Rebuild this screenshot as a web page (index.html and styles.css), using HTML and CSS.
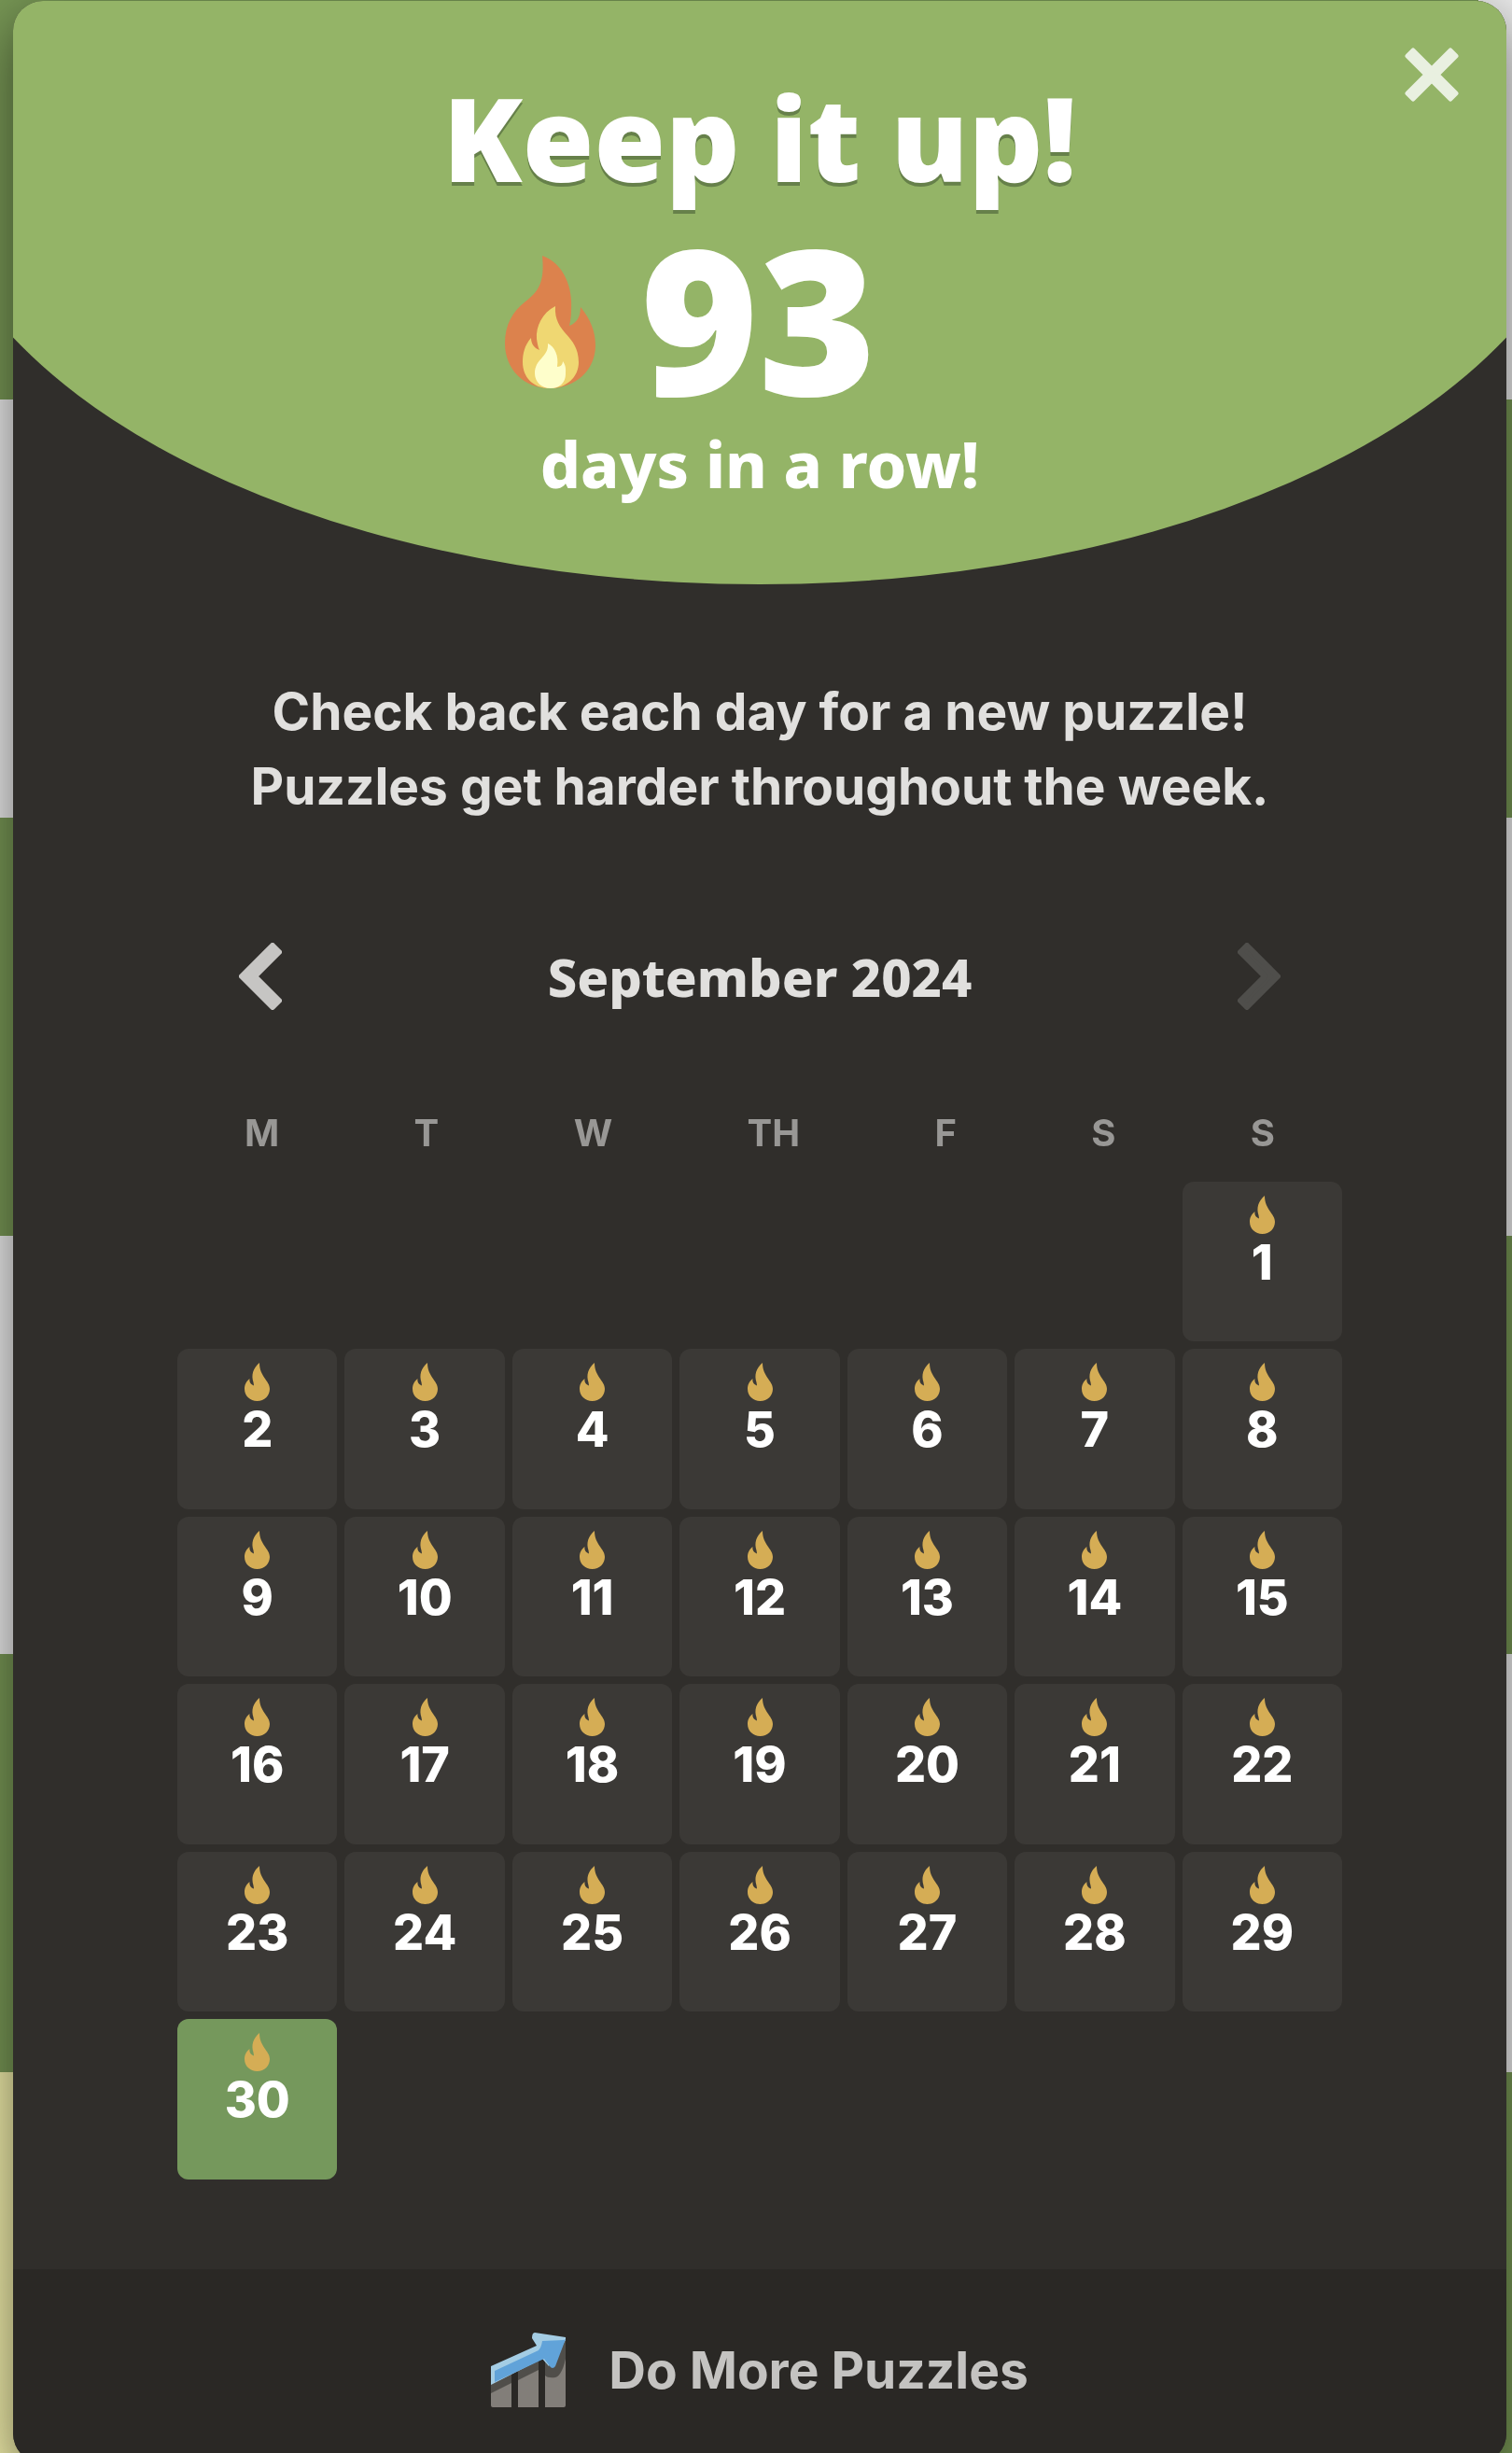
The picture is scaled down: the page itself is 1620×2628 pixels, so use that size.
FILE: index.html
```html
<!DOCTYPE html>
<html lang="en">
<head>
<meta charset="utf-8">
<meta name="viewport" content="width=device-width, initial-scale=1">
<title>Daily Puzzle Streak</title>
<link rel="stylesheet" href="styles.css">
</head>
<body>
<svg class="defs" width="0" height="0" aria-hidden="true">
  <symbol id="flame" viewBox="0 0 27 41">
    <path d="M16 0C9 6 7 13 9.500 21C9.800 23 10 24 10 24.500C6 23 5 20 5.500 17C1.500 20 0 24 0 28C0 35.500 6 41 13.500 41C21.500 41 27 35 27 28C27 19 16 15 16 0Z"/>
  </symbol>
</svg>
<div class="board" aria-hidden="true">
  <div class="file file-left"><i></i><i></i><i></i><i></i><i></i><i class="moved"></i></div>
  <div class="file file-right"><i></i><i></i><i></i><i></i><i></i><i></i></div>
</div>
<div class="overlay">
  <main class="modal" role="dialog" aria-labelledby="title">
    <header class="hero">
      <h1 id="title" class="title">Keep it up!</h1>
      <div class="streak">
        <svg class="streak-flame" viewBox="0 0 97 142" aria-hidden="true">
          <path fill="#dc824d" d="M40 0C63 8 73 34 71 59C71 65 70 70 69 75C77 72 81 65 81 55C92 68 97 82 97 96C97 123 75 142 48 142C21 142 0 122 0 94C0 74 8 60 22 49C35 39 43 30 40 0Z"/>
          <path fill="#efd772" d="M54 54C40 61 33 76 34 89C35 96 36 99 37 101C31 99 28 94 28 88C21 96 19 105 19 114C19 130 30 142 48 142C66 142 79 130 79 114C79 84 52 84 54 54Z"/>
          <path fill="#fefecb" d="M46 94C53 97 58 107 56 119C60 119 62 116 62 113C66 118 65 124 65 127C65 136 58 142 49 142C39 142 32 135 32 126C32 110 47 109 46 94Z"/>
        </svg>
        <strong class="count">93</strong>
      </div>
      <p class="unit">days in a row!</p>
      <button class="close" type="button" aria-label="Close">
        <svg viewBox="0 0 60 60" aria-hidden="true"><path d="M10 4L30 24L50 4L56 10L36 30L56 50L50 56L30 36L10 56L4 50L24 30L4 10Z"/></svg>
      </button>
    </header>

    <p class="intro">Check back each day for a new puzzle!<br>Puzzles get harder throughout the week.</p>

    <section class="calendar" aria-labelledby="month">
      <div class="month-bar">
        <button class="nav" type="button" aria-label="Previous month">
          <svg viewBox="0 0 46 72" aria-hidden="true"><path d="M36 3L3 36L36 69L43 62L17 36L43 10Z"/></svg>
        </button>
        <h2 id="month" class="month">September 2024</h2>
        <button class="nav" type="button" aria-label="Next month" disabled>
          <svg viewBox="0 0 46 72" aria-hidden="true"><path d="M10 3L43 36L10 69L3 62L29 36L3 10Z"/></svg>
        </button>
      </div>
      <div class="weekdays"><span>M</span><span>T</span><span>W</span><span>TH</span><span>F</span><span>S</span><span>S</span></div>
      <div class="days" id="days"></div>
    </section>

    <footer class="footer">
      <button class="more" type="button">
        <svg class="chart" viewBox="0 0 80 80" aria-hidden="true">
          <path fill="#827e79" d="M0 56L22 45V80H2Q0 80 0 78ZM29 41L51 30V80H29ZM58 28L80 10V78Q80 80 78 80H58Z"/>
          <path fill="#504e4a" d="M0 54L22 43V54L0 65ZM29 38L51 28V40L29 51ZM58 26L80 8V28Q76 46 69 48Q61 49 58 46Z"/>
          <path fill="#a4cde4" d="M0 36L49 14L44 6Q44 0 47 0L80 5V8L62 36L55 28L0 56Z"/>
          <path fill="#61a3d9" d="M4 41L51 19Q54 16 55 9L78 8L80 7L69 36Q66 40 63 36L57 28L4 53Z"/>
        </svg>
        <span>Do More Puzzles</span>
      </button>
    </footer>
  </main>
</div>
<script src="calendar.js"></script>
</body>
</html>
```
FILE: styles.css
```css
* { box-sizing: border-box; }

body {
  margin: 0;
  background: #769554;
  color: #e1e0de;
  font-family: Inter, "Liberation Sans", sans-serif;
}

button {
  padding: 0;
  border: 0;
  background: none;
  color: inherit;
  font: inherit;
  cursor: pointer;
}

h1, h2, p { margin: 0; }
svg { display: block; }
.defs { position: absolute; }

/* Chess board behind the dialog */
.board {
  position: fixed;
  inset: 0;
  display: flex;
  justify-content: space-between;
  overflow: hidden;
}
.file { display: grid; grid-auto-rows: 448px; margin-top: -20px; }
.file-left { width: 60px; }
.file-right { width: 36px; }
.file i { background: #769554; }
.file-left i:nth-child(even), .file-right i:nth-child(odd) { background: #e8e8e8; }
.file-left i.moved:last-child { background: #ebe8a6; }

.overlay {
  position: relative;
  height: 100vh;
  padding: 1px 6px 0 14px;
  overflow: hidden;
}

.modal {
  display: flex;
  flex-direction: column;
  border-radius: 32px;
  background: #302e2b;
  box-shadow: 0 20px 60px rgba(0, 0, 0, .52);
  overflow: hidden;
}

.hero {
  position: relative;
  display: flex;
  flex-direction: column;
  align-items: center;
  height: 625px;
  padding-top: 74px;
  background: #94b467;
  clip-path: ellipse(56% 77% at 50% 23%);
  color: #fff;
  font-family: "Noto Sans", "Open Sans", sans-serif;
}
.title {
  margin-bottom: 8px;
  font-size: 124px;
  font-weight: 900;
  line-height: 144px;
  text-shadow: 0 4px 0 #66804a;
}
.streak {
  display: flex;
  align-items: center;
  gap: 48px;
  padding-right: 148px;
}
.streak-flame { width: 97px; height: 142px; }
.count { margin-bottom: 10px; font-size: 216px; font-weight: 900; line-height: 226px; }
.unit { font-size: 68px; font-weight: 800; line-height: 68px; }
.close { position: absolute; top: 49px; right: 50px; }
.close svg { width: 60px; height: 60px; fill: #e9f0e0; stroke: #e9f0e0; stroke-width: 5; stroke-linejoin: round; }

.intro {
  padding-top: 96px;
  font-size: 55px;
  font-weight: 650;
  line-height: 80px;
  text-align: center;
}

.calendar { padding: 120px 176px 96px; }
.month-bar {
  display: flex;
  align-items: center;
  justify-content: space-between;
  height: 88px;
  padding: 0 66px;
}
.nav { color: #c6c5c3; }
.nav:disabled { color: #4f4e4b; }
.nav svg { width: 46px; height: 72px; fill: currentColor; stroke: currentColor; stroke-width: 6; stroke-linejoin: round; }
.month { font-family: "Noto Sans", "Open Sans", sans-serif; font-size: 56px; font-weight: 800; line-height: 80px; }

.weekdays {
  display: flex;
  justify-content: space-between;
  padding: 100px 72px 28px;
  color: #989795;
  font-size: 40px;
  font-weight: 700;
  line-height: 48px;
}

.days {
  display: grid;
  grid-template-columns: repeat(7, 1fr);
  gap: 8px;
}
.day {
  display: flex;
  flex-direction: column;
  align-items: center;
  gap: 4px;
  aspect-ratio: 1;
  padding-top: 15px;
  border-radius: 12px;
  background: #3b3936;
  color: #fff;
  font-size: 52px;
  font-weight: 800;
  line-height: 54px;
}
.day:first-child { grid-column-start: 7; }
.day svg { width: 27px; height: 41px; fill: #d5ad55; }
.day.today { background: #75985c; }

.footer {
  display: flex;
  justify-content: center;
  padding: 68px 0 60px;
  background: #2a2825;
}
.more {
  display: flex;
  align-items: center;
  gap: 46px;
  color: #c4c3c1;
  font-size: 55px;
  font-weight: 650;
  line-height: 80px;
}
.chart { width: 80px; height: 80px; }
```
FILE: calendar.js
```js
const days = document.getElementById("days");
for (let n = 1; n <= 30; n++) {
  const cell = document.createElement("button");
  cell.type = "button";
  cell.className = n === 30 ? "day today" : "day";
  cell.innerHTML = '<svg aria-hidden="true"><use href="#flame"/></svg><span>' + n + "</span>";
  days.append(cell);
}
```
